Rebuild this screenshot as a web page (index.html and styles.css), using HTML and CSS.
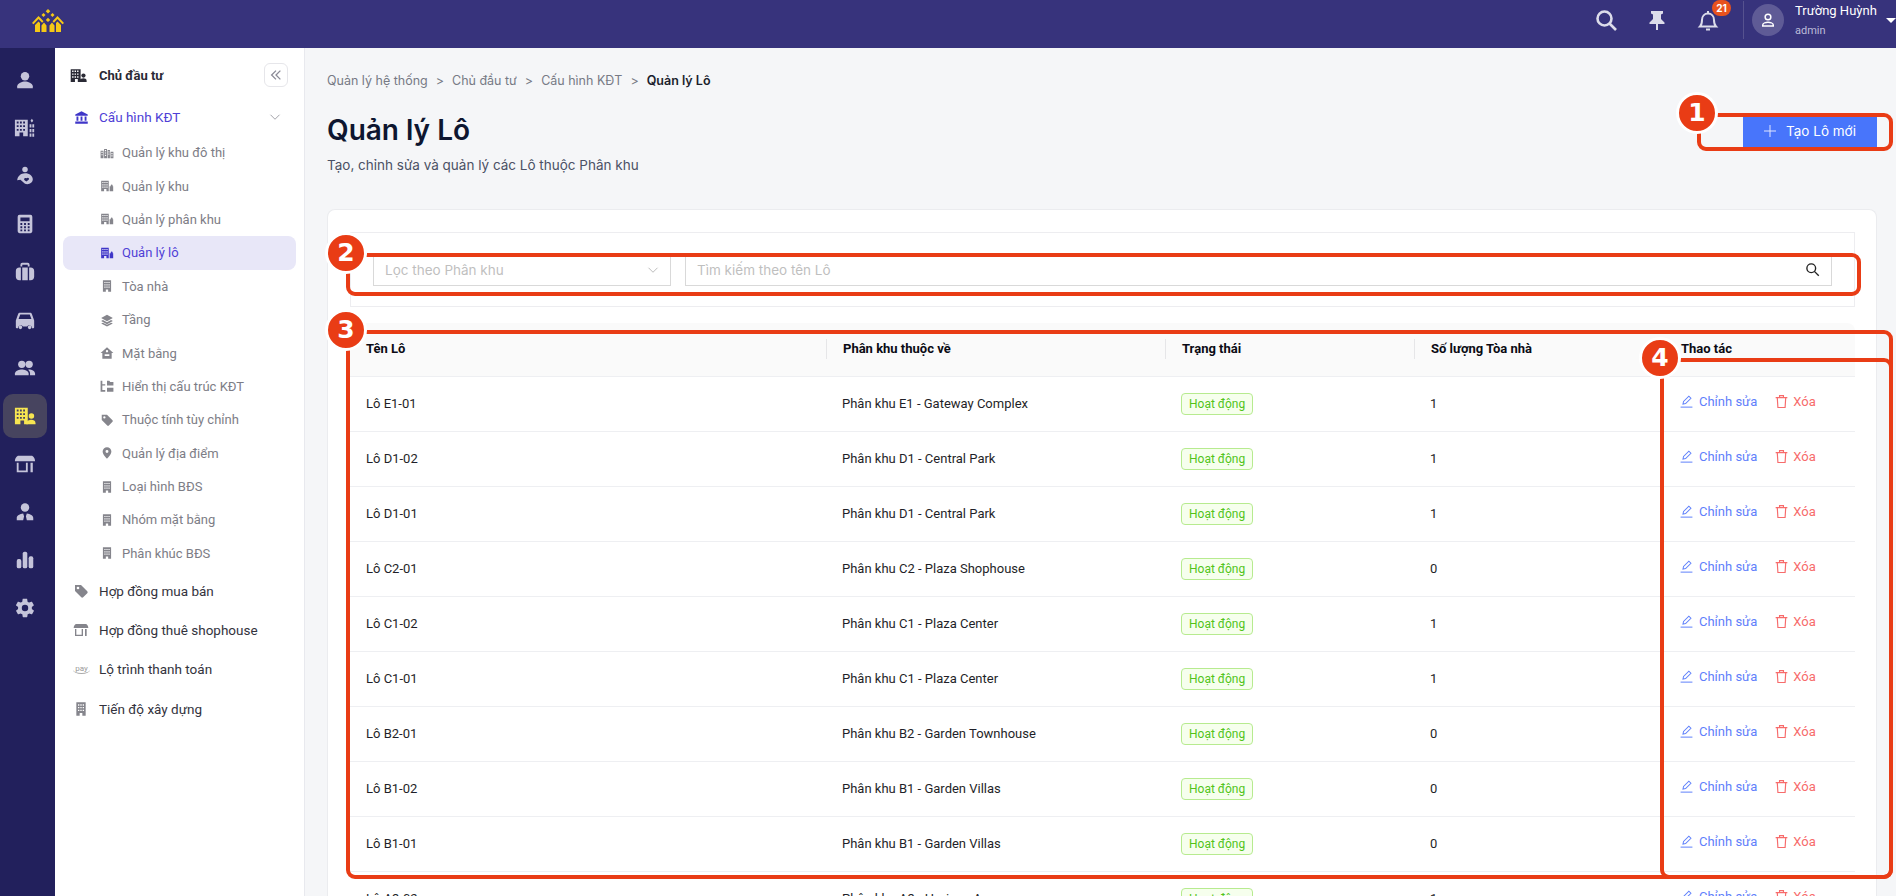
FILE: index.html
```html
<!DOCTYPE html>
<html lang="vi">
<head>
    <meta charset="UTF-8">
    <meta name="viewport" content="width=device-width, initial-scale=1.0">
    <title>Quản lý Lô</title>
    <link rel="stylesheet" href="styles.css">
</head>
<body>
    <svg class="sprite" aria-hidden="true">
        <symbol id="i-person" viewBox="0 0 24 24"><circle cx="12" cy="8" r="4.6"/><path d="M3.500 21v-2.200c0-3.400 5.600-5.200 8.500-5.200s8.500 1.800 8.500 5.200V21z"/></symbol>
        <symbol id="i-city" viewBox="0 0 24 24"><path d="M1 3h14v18H10v-4H6v4H1zM3 5v2h2V5zm3.500 0v2h2V5zM10 5v2h2V5zM3 9v2h2V9zm3.500 0v2h2V9zM10 9v2h2V9zM3 13v2h2v-2zm3.500 0v2h2v-2zm3.500 0v2h2v-2z"/><path d="M19.500 2l1.500 2-1.500 2L18 4zm-2.500 6h2v3.500h-2zm3 0h2v3.500h-2zm-3 5h2v3.500h-2zm3 0h2v3.500h-2zm-3 5h2v3.500h-2zm3 0h2v3.500h-2z"/></symbol>
        <symbol id="i-hand" viewBox="0 0 24 24"><circle cx="12" cy="5" r="3"/><path d="M12 9c5 0 8.500 3 8.500 6.500S16.500 22 12 20.500L7 16l-3.500.5C4 12 7.500 9 12 9zm1.500 5.500c-1.500-1-3.500.5-2 2l2 1.500 2.500-2c1.200-1.500-.8-3-2.500-1.500z"/></symbol>
        <symbol id="i-calc" viewBox="0 0 24 24"><path d="M6 2h12a2 2 0 0 1 2 2v16a2 2 0 0 1-2 2H6a2 2 0 0 1-2-2V4a2 2 0 0 1 2-2zm1 3v4h10V5zm0 6v2h2v-2zm4 0v2h2v-2zm4 0v2h2v-2zm-8 3.500v2h2v-2zm4 0v2h2v-2zm4 0v2h2v-2zM7 18v2h2v-2zm4 0v2h2v-2zm4 0v2h2v-2z"/></symbol>
        <symbol id="i-case" viewBox="0 0 24 24"><path d="M9 2h6a2 2 0 0 1 2 2v2h-2V4H9v2H7V4a2 2 0 0 1 2-2zM6 7h1.500v14H6a4 4 0 0 1-4-4v-6a4 4 0 0 1 4-4zm3 0h6v14H9zm7.500 0H18a4 4 0 0 1 4 4v6a4 4 0 0 1-4 4h-1.500z"/></symbol>
        <symbol id="i-car" viewBox="0 0 24 24"><path d="M6.500 4h11c1 0 1.700.6 2 1.400L22 12.500V20a1 1 0 0 1-1 1h-1.300a3 3 0 0 0-5.400-2H9.700a3 3 0 0 0-5.400 2H3a1 1 0 0 1-1-1v-7.500l2.500-7.100C4.800 4.600 5.500 4 6.500 4zm.3 2L5 11h14l-1.800-5zM7 18a2 2 0 1 1 0 4 2 2 0 0 1 0-4zm10 0a2 2 0 1 1 0 4 2 2 0 0 1 0-4z"/></symbol>
        <symbol id="i-people" viewBox="0 0 24 24"><circle cx="8.500" cy="8" r="4"/><circle cx="16.500" cy="8" r="4"/><path d="M1 20v-2c0-3 5-4.500 7.500-4.500S16 15 16 18v2z"/><path d="M17.500 20v-2c0-1.700-.9-3-2.200-4l1.200-.5c2.500 0 6.500 1.500 6.500 4.500v2z"/></symbol>
        <symbol id="i-owner" viewBox="0 0 24 24"><path d="M1 3h14v18h-4v-4H7v4H1zM3 5v2h2V5zm3.500 0v2h2V5zM10 5v2h2V5zM3 9v2h2V9zm3.500 0v2h2V9zM10 9v2h2V9zM3 13v2h2v-2zm3.500 0v2h2v-2zm3.500 0v2h2v-2z"/><circle cx="19" cy="12" r="3"/><path d="M13.500 21v-1.500c0-2.400 3.500-3.500 5.500-3.500s4.500 1.100 4.500 3.500V21z"/></symbol>
        <symbol id="i-shop" viewBox="0 0 24 24"><path d="M5 3h14c2 0 4 3 4 6H1c0-3 2-6 4-6zM3 10.500h2V19h8v-8.500h2V21H3zM18 10.500h2.500V21H18z"/></symbol>
        <symbol id="i-agent" viewBox="0 0 24 24"><circle cx="12" cy="7" r="4.600"/><path d="M3 21v-2.500c0-3 3.500-4.500 7-5l1 3-1 4.500zm18 0v-2.500c0-3-3.500-4.500-7-5l-1 3 1 4.500z"/></symbol>
        <symbol id="i-chart" viewBox="0 0 24 24"><rect x="3" y="11" width="5" height="10" rx="2"/><rect x="9.500" y="3" width="5" height="18" rx="2"/><rect x="16" y="8" width="5" height="13" rx="2"/></symbol>
        <symbol id="i-gear" viewBox="0 0 24 24"><path d="M19.400 13c.1-.3.100-.7.100-1s0-.7-.1-1l2.100-1.600c.2-.2.200-.4.100-.6l-2-3.500c-.1-.2-.4-.3-.6-.2l-2.500 1a7.600 7.600 0 0 0-1.700-1l-.4-2.700c0-.2-.2-.4-.5-.4h-4c-.2 0-.4.200-.5.400l-.4 2.700c-.6.200-1.200.6-1.700 1l-2.500-1c-.2-.1-.5 0-.6.200l-2 3.500c-.1.200-.1.500.1.600L4.500 11c0 .3-.1.700-.1 1s0 .7.100 1l-2.100 1.600c-.2.200-.2.400-.1.600l2 3.500c.1.200.4.300.6.200l2.500-1c.5.400 1.100.8 1.700 1l.4 2.700c0 .2.200.4.500.4h4c.2 0 .4-.2.500-.4l.4-2.700c.6-.2 1.200-.6 1.700-1l2.500 1c.2.100.5 0 .6-.2l2-3.500c.1-.2.100-.5-.1-.6zM12 15.500a3.500 3.500 0 1 1 0-7 3.500 3.500 0 0 1 0 7z"/></symbol>
        <symbol id="i-bank" viewBox="0 0 24 24"><path d="M12 2l10 5v2H2V7zM4 10.500h3V17H4zm6.500 0h3V17h-3zm6.500 0h3V17h-3zM2 18.500h20V22H2z"/></symbol>
        <symbol id="i-block" viewBox="0 0 24 24"><path d="M2 3h13v18h-4v-4H7v4H2zM4 5v2h2V5zm3.500 0v2h2V5zM11 5v2h2V5zM4 9v2h2V9zm3.500 0v2h2V9zM11 9v2h2V9zM4 13v2h2v-2zm3.500 0v2h2v-2zm3.500 0v2h2v-2z"/><path d="M16.500 12.500h2l-.2-1.500a1.800 1.800 0 0 1 3.500 0l-.2 1.500h1v8.500h-6z"/></symbol>
        <symbol id="i-urban" viewBox="0 0 24 24"><path d="M1 8h5v13H1zm6-3h5v16H7zm6 2h4v14h-4zm5 3h5v11h-5z"/><path d="M2.500 10v2h2v-2zm0 4v2h2v-2zm6-7v2h2V7zm0 4v2h2v-2zm0 4v2h2v-2zm6-6v2h1.500V9zm0 4v2h1.500v-2zm5-1v2h2v-2zm0 4v2h2v-2z" fill="#fff"/></symbol>
        <symbol id="i-tower" viewBox="0 0 24 24"><path d="M5 2h14v20h-5v-4h-4v4H5zM7.500 5v2h2V5zm3.500 0v2h2V5zm3.500 0v2h2V5zM7.500 9v2h2V9zM11 9v2h2V9zm3.500 0v2h2V9zm-7 4v2h2v-2zm3.500 0v2h2v-2zm3.500 0v2h2v-2z"/></symbol>
        <symbol id="i-layers" viewBox="0 0 24 24"><path d="M12 3l10 5.500L12 14 2 8.500zM5 12.200l7 3.800 7-3.800 3 1.600-10 5.500-10-5.500zM5 16.500l7 3.800 7-3.800 3 1.600L12 23 2 18.100z"/></symbol>
        <symbol id="i-home" viewBox="0 0 24 24"><path d="M12 2l11 10h-3v10H4V12H1zM8 14v3h8v-3zm4-7a2 2 0 1 0 0 4 2 2 0 0 0 0-4z"/></symbol>
        <symbol id="i-tree" viewBox="0 0 24 24"><path d="M1 3h3v16h5v3H1zM4 9h5v2H4zM12 3h4l1.500 2H23v6H12zM12 15h11v7H12z"/></symbol>
        <symbol id="i-tag" viewBox="0 0 24 24"><path d="M3 3h9l9.400 9.400a2 2 0 0 1 0 2.800l-6.200 6.200a2 2 0 0 1-2.800 0L3 12zm4.500 2.500a2 2 0 1 0 0 4 2 2 0 0 0 0-4z"/></symbol>
        <symbol id="i-pin" viewBox="0 0 24 24"><path d="M12 2a7.500 7.500 0 0 1 7.500 7.500C19.500 15 12 22 12 22S4.500 15 4.500 9.500A7.500 7.500 0 0 1 12 2zm0 5a2.500 2.500 0 1 0 0 5 2.500 2.500 0 0 0 0-5z"/></symbol>
        <symbol id="i-pen" viewBox="1 1 22 22" fill="none" stroke="currentColor" stroke-width="1.700"><path d="M6 16.500l1-4.500L16 3l3.500 3.500-9 9z"/><path d="M2 21.500h20"/></symbol>
        <symbol id="i-trash" viewBox="2 2 20 20" fill="none" stroke="currentColor" stroke-width="1.800"><path d="M3 6h18M9 6V3h6v3M5.500 6l1 15.500h11l1-15.500"/></symbol>
    </svg>

    <header class="topbar">
        <a class="logo" href="#" aria-label="Trang chủ">
            <svg viewBox="0 0 32 23" width="32" height="23" fill="#f5c816">
                <path d="M16 0l2.300 2.300L16 4.600l-2.300-2.300zM11.500 4l2 2-2 2-2-2zM20.500 4l2 2-2 2-2-2zM16 8.700l2.200 2.200-2.200 2.200-2.200-2.200z"/>
                <path d="M0 14l6.500-7 5 5.200-1.400 1.500-3.600-3.800-5 5.400zM32 14l-6.500-7-5 5.200 1.400 1.500 3.600-3.800 5 5.400z"/>
                <path d="M3 16l3.500-3.500L8 14v9H3zM29 16l-3.500-3.500L24 14v9h5zM9.500 23v-6.500l2.500-3 2.500 3V23zM17.500 23v-6.500l2.500-3 2.500 3V23z"/>
            </svg>
        </a>
        <div class="topbar-tools">
            <svg class="tool" viewBox="0 0 24 24" width="24" height="24" fill="none" stroke="#dcdcea" stroke-width="2.600"><circle cx="10.500" cy="10.500" r="7"/><path d="M15.500 15.500l6.500 6.500"/></svg>
            <svg class="tool" viewBox="0 0 24 24" width="24" height="24" fill="#dcdcea"><path d="M6 3h12v2.500l-2 1V11l3.500 3.500V16H13v6h-2v-6H4.500v-1.500L8 11V6.500l-2-1z"/></svg>
            <div class="bell">
                <svg viewBox="0 0 24 24" width="24" height="24" fill="none" stroke="#dcdcea" stroke-width="2"><path d="M4 18.500h16c-1.500-1.500-2-3-2-6.500 0-3.800-2.500-6.500-6-6.500S6 8.200 6 12c0 3.500-.5 5-2 6.500z"/><path d="M10 21.500h4M12 3v2.500"/></svg>
                <span class="badge">21</span>
            </div>
            <div class="user">
                <span class="avatar">
                    <svg viewBox="0 0 24 24" width="18" height="18" fill="none" stroke="#fff" stroke-width="2"><circle cx="12" cy="8" r="3.800"/><path d="M5 20v-1.500c0-2.500 4.500-3.500 7-3.500s7 1 7 3.500V20z"/></svg>
                </span>
                <div class="user-text">
                    <div class="user-name">Trường Huỳnh</div>
                    <div class="user-role">admin</div>
                </div>
                <span class="caret"></span>
            </div>
        </div>
    </header>

    <div class="layout">
        <nav class="rail">
            <a class="rail-item"><svg><use href="#i-person"/></svg></a>
            <a class="rail-item"><svg><use href="#i-city"/></svg></a>
            <a class="rail-item"><svg><use href="#i-hand"/></svg></a>
            <a class="rail-item"><svg><use href="#i-calc"/></svg></a>
            <a class="rail-item"><svg><use href="#i-case"/></svg></a>
            <a class="rail-item"><svg><use href="#i-car"/></svg></a>
            <a class="rail-item"><svg><use href="#i-people"/></svg></a>
            <a class="rail-item active"><svg><use href="#i-owner"/></svg></a>
            <a class="rail-item"><svg><use href="#i-shop"/></svg></a>
            <a class="rail-item"><svg><use href="#i-agent"/></svg></a>
            <a class="rail-item"><svg><use href="#i-chart"/></svg></a>
            <a class="rail-item"><svg><use href="#i-gear"/></svg></a>
        </nav>

        <aside class="sidebar">
            <div class="side-title">
                <svg class="side-title-icon"><use href="#i-owner"/></svg>
                <span>Chủ đầu tư</span>
                <button class="collapse">
                    <svg viewBox="0 0 16 16" width="14" height="14" fill="none" stroke="#8a8a96" stroke-width="1.500"><path d="M8 3L3 8l5 5M13 3L8 8l5 5"/></svg>
                </button>
            </div>
            <div class="group-head">
                <svg class="group-icon"><use href="#i-bank"/></svg>
                <span>Cấu hình KĐT</span>
                <svg class="group-arrow" viewBox="0 0 16 16" width="12" height="12" fill="none" stroke="#a0a0a8" stroke-width="1.300"><path d="M2 5l6 6 6-6"/></svg>
            </div>
            <ul class="sub-menu">
                <li><svg><use href="#i-urban"/></svg>Quản lý khu đô thị</li>
                <li><svg><use href="#i-block"/></svg>Quản lý khu</li>
                <li><svg><use href="#i-block"/></svg>Quản lý phân khu</li>
                <li class="active"><svg><use href="#i-block"/></svg>Quản lý lô</li>
                <li><svg><use href="#i-tower"/></svg>Tòa nhà</li>
                <li><svg><use href="#i-layers"/></svg>Tầng</li>
                <li><svg><use href="#i-home"/></svg>Mặt bằng</li>
                <li><svg><use href="#i-tree"/></svg>Hiển thị cấu trúc KĐT</li>
                <li><svg><use href="#i-tag"/></svg>Thuộc tính tùy chỉnh</li>
                <li><svg><use href="#i-pin"/></svg>Quản lý địa điểm</li>
                <li><svg><use href="#i-tower"/></svg>Loại hình BĐS</li>
                <li><svg><use href="#i-tower"/></svg>Nhóm mặt bằng</li>
                <li><svg><use href="#i-tower"/></svg>Phân khúc BĐS</li>
            </ul>
            <ul class="main-menu">
                <li><svg><use href="#i-tag"/></svg>Hợp đồng mua bán</li>
                <li><svg><use href="#i-shop"/></svg>Hợp đồng thuê shophouse</li>
                <li><span class="pay">pay</span>Lộ trình thanh toán</li>
                <li><svg><use href="#i-tower"/></svg>Tiến độ xây dựng</li>
            </ul>
        </aside>

        <main class="content">
            <div class="crumbs">
                <span>Quản lý hệ thống</span><i>&gt;</i>
                <span>Chủ đầu tư</span><i>&gt;</i>
                <span>Cấu hình KĐT</span><i>&gt;</i>
                <b>Quản lý Lô</b>
            </div>
            <div class="page-head">
                <div>
                    <h1>Quản lý Lô</h1>
                    <p>Tạo, chỉnh sửa và quản lý các Lô thuộc Phân khu</p>
                </div>
                <button class="btn-new">
                    <svg viewBox="0 0 12 12" width="12" height="12" stroke="#dfe6ff" stroke-width="1"><path d="M6 0v12M0 6h12"/></svg>
                    Tạo Lô mới
                </button>
            </div>

            <section class="card">
                <div class="filters">
                    <div class="select">
                        <span>Lọc theo Phân khu</span>
                        <svg viewBox="0 0 16 16" width="12" height="12" fill="none" stroke="#b5b5b5" stroke-width="1.200"><path d="M2 5l6 6 6-6"/></svg>
                    </div>
                    <div class="search">
                        <span>Tìm kiếm theo tên Lô</span>
                        <svg viewBox="0 0 24 24" width="15" height="15" fill="none" stroke="#222" stroke-width="2.200"><circle cx="10" cy="10" r="7"/><path d="M15 15l7 7"/></svg>
                    </div>
                </div>

                <table class="grid">
                    <thead>
                        <tr>
                            <th class="col-name"><span>Tên Lô</span></th>
                            <th class="col-zone"><span>Phân khu thuộc về</span></th>
                            <th class="col-status"><span>Trạng thái</span></th>
                            <th class="col-count"><span>Số lượng Tòa nhà</span></th>
                            <th class="col-act"><span>Thao tác</span></th>
                        </tr>
                    </thead>
                    <tbody>
                        <tr><td>Lô E1-01</td><td>Phân khu E1 - Gateway Complex</td><td><span class="tag">Hoạt động</span></td><td>1</td><td class="acts"><a class="edit"><svg><use href="#i-pen"/></svg>Chỉnh sửa</a><a class="del"><svg><use href="#i-trash"/></svg>Xóa</a></td></tr>
                        <tr><td>Lô D1-02</td><td>Phân khu D1 - Central Park</td><td><span class="tag">Hoạt động</span></td><td>1</td><td class="acts"><a class="edit"><svg><use href="#i-pen"/></svg>Chỉnh sửa</a><a class="del"><svg><use href="#i-trash"/></svg>Xóa</a></td></tr>
                        <tr><td>Lô D1-01</td><td>Phân khu D1 - Central Park</td><td><span class="tag">Hoạt động</span></td><td>1</td><td class="acts"><a class="edit"><svg><use href="#i-pen"/></svg>Chỉnh sửa</a><a class="del"><svg><use href="#i-trash"/></svg>Xóa</a></td></tr>
                        <tr><td>Lô C2-01</td><td>Phân khu C2 - Plaza Shophouse</td><td><span class="tag">Hoạt động</span></td><td>0</td><td class="acts"><a class="edit"><svg><use href="#i-pen"/></svg>Chỉnh sửa</a><a class="del"><svg><use href="#i-trash"/></svg>Xóa</a></td></tr>
                        <tr><td>Lô C1-02</td><td>Phân khu C1 - Plaza Center</td><td><span class="tag">Hoạt động</span></td><td>1</td><td class="acts"><a class="edit"><svg><use href="#i-pen"/></svg>Chỉnh sửa</a><a class="del"><svg><use href="#i-trash"/></svg>Xóa</a></td></tr>
                        <tr><td>Lô C1-01</td><td>Phân khu C1 - Plaza Center</td><td><span class="tag">Hoạt động</span></td><td>1</td><td class="acts"><a class="edit"><svg><use href="#i-pen"/></svg>Chỉnh sửa</a><a class="del"><svg><use href="#i-trash"/></svg>Xóa</a></td></tr>
                        <tr><td>Lô B2-01</td><td>Phân khu B2 - Garden Townhouse</td><td><span class="tag">Hoạt động</span></td><td>0</td><td class="acts"><a class="edit"><svg><use href="#i-pen"/></svg>Chỉnh sửa</a><a class="del"><svg><use href="#i-trash"/></svg>Xóa</a></td></tr>
                        <tr><td>Lô B1-02</td><td>Phân khu B1 - Garden Villas</td><td><span class="tag">Hoạt động</span></td><td>0</td><td class="acts"><a class="edit"><svg><use href="#i-pen"/></svg>Chỉnh sửa</a><a class="del"><svg><use href="#i-trash"/></svg>Xóa</a></td></tr>
                        <tr><td>Lô B1-01</td><td>Phân khu B1 - Garden Villas</td><td><span class="tag">Hoạt động</span></td><td>0</td><td class="acts"><a class="edit"><svg><use href="#i-pen"/></svg>Chỉnh sửa</a><a class="del"><svg><use href="#i-trash"/></svg>Xóa</a></td></tr>
                        <tr><td>Lô A3-02</td><td>Phân khu A3 - Horizon Arena</td><td><span class="tag">Hoạt động</span></td><td>1</td><td class="acts"><a class="edit"><svg><use href="#i-pen"/></svg>Chỉnh sửa</a><a class="del"><svg><use href="#i-trash"/></svg>Xóa</a></td></tr>
                    </tbody>
                </table>
            </section>
        </main>
    </div>

    <!-- red callouts drawn on top of the screenshot -->
    <div class="mark mark-1"><span class="num">1</span></div>
    <div class="mark mark-2"><span class="num">2</span></div>
    <div class="mark mark-3"><span class="num">3</span></div>
    <div class="mark mark-4"><span class="num">4</span></div>
</body>
</html>
```

FILE: styles.css
```css
* {
    box-sizing: border-box;
}
html, body {
    margin: 0;
    height: 100%;
    overflow: hidden;
}
body {
    font-family: Roboto, 'Liberation Sans', sans-serif;
    font-size: 13px;
    color: #1c1c28;
    background: #f5f6f8;
    position: relative;
}
.sprite {
    position: absolute;
    width: 0;
    height: 0;
}
ul {
    list-style: none;
    margin: 0;
    padding: 0;
}

/* top bar */
.topbar {
    height: 48px;
    background: #37337c;
    display: flex;
    align-items: center;
    justify-content: space-between;
    padding: 0 0 8px 32px;
}
.logo {
    display: flex;
}
.topbar-tools {
    display: flex;
    align-items: center;
}
.tool {
    display: block;
    margin-right: 27px;
}
.bell {
    position: relative;
    height: 24px;
    margin-right: 23px;
}
.badge {
    position: absolute;
    top: -8px;
    left: 16px;
    width: 19px;
    height: 16px;
    border-radius: 8px;
    background: #e8521e;
    color: #fff;
    font: 700 10px/16px Inter, sans-serif;
    text-align: center;
}
.user {
    height: 38px;
    border-left: 1px solid #56528f;
    padding-left: 8px;
    display: flex;
    align-items: center;
    width: 153px;
}
.avatar {
    width: 32px;
    height: 32px;
    border-radius: 50%;
    background: #5f5b96;
    display: flex;
    align-items: center;
    justify-content: center;
    margin-right: 11px;
}
.user-name {
    color: #fff;
    font-size: 13px;
    line-height: 16px;
    white-space: nowrap;
}
.user-role {
    color: #bcbbd8;
    font-size: 11px;
    line-height: 14px;
    margin-top: 5px;
}
.caret {
    border: 5px solid transparent;
    border-top-color: #fff;
    border-bottom-width: 0;
    margin: 0 0 0 9px;
}

/* layout */
.layout {
    display: flex;
    height: 848px;
}
.rail {
    width: 55px;
    background: #22205c;
    padding: 10px 8px 0 3px;
    flex-shrink: 0;
}
.rail-item {
    height: 44px;
    margin-bottom: 4px;
    border-radius: 10px;
    display: flex;
    align-items: center;
    justify-content: center;
}
.rail-item svg {
    width: 22px;
    height: 22px;
    fill: #c5c4da;
}
.rail-item.active {
    background: #47445f;
}
.rail-item.active svg {
    fill: #f7e651;
}

/* sidebar */
.sidebar {
    width: 250px;
    flex-shrink: 0;
    background: #fff;
    border-right: 1px solid #e8e9ee;
    padding: 14px 0 0 0;
}
.side-title {
    display: flex;
    align-items: center;
    height: 26px;
    padding: 0 16px 0 15px;
    font-weight: 700;
    font-size: 13px;
    color: #2a2a35;
}
.side-title-icon {
    width: 17px;
    height: 17px;
    fill: #2a2a35;
    margin-right: 12px;
}
.collapse {
    margin-left: auto;
    width: 24px;
    height: 24px;
    background: #fff;
    border: 1px solid #e6e6ea;
    border-radius: 6px;
    padding: 0;
    display: flex;
    align-items: center;
    justify-content: center;
}
.group-head {
    display: flex;
    align-items: center;
    height: 24px;
    margin-top: 17px;
    padding: 0 23px 0 19px;
    color: #4f3fd6;
    font-size: 13.5px;
}
.group-icon {
    width: 15px;
    height: 15px;
    fill: #3f36c8;
    margin-right: 10px;
}
.group-arrow {
    margin-left: auto;
}
.sub-menu {
    margin-top: 7px;
    padding: 0 8px;
}
.sub-menu li {
    height: 33.4px;
    display: flex;
    align-items: center;
    padding-left: 37px;
    color: #7d7d86;
    font-size: 13px;
    border-radius: 8px;
}
.sub-menu svg {
    width: 14px;
    height: 14px;
    fill: #85858c;
    margin-right: 8px;
    flex-shrink: 0;
}
.sub-menu .active {
    background: #e8e7f8;
    color: #4f3fd6;
}
.sub-menu .active svg {
    fill: #3f36c8;
}
.main-menu {
    margin-top: 1px;
}
.main-menu li {
    height: 39.3px;
    display: flex;
    align-items: center;
    padding-left: 18px;
    font-size: 13.5px;
    color: #33333d;
}
.main-menu svg {
    width: 16px;
    height: 16px;
    fill: #85858c;
    margin-right: 10px;
    flex-shrink: 0;
}
.pay {
    width: 17px;
    margin-right: 9px;
    font-size: 8px;
    line-height: 9px;
    color: #999;
    border-bottom: 1px solid #aaa;
    border-radius: 0 0 50% 50% / 0 0 4px 4px;
    text-align: center;
}

/* content */
.content {
    flex: 1;
    min-width: 0;
    padding: 23px 19px 0 22px;
    font-family: Inter, sans-serif;
}
.crumbs {
    font-size: 12.5px;
    line-height: 20px;
    color: #777a85;
    display: flex;
    align-items: center;
}
.crumbs i {
    font-style: normal;
    margin: 0 8px;
}
.crumbs b {
    font-weight: 600;
    color: #1b1f2d;
}
.page-head {
    display: flex;
    justify-content: space-between;
    margin-top: 21px;
    height: 97px;
}
h1 {
    margin: 0;
    font-size: 28px;
    line-height: 36px;
    font-weight: 600;
    color: #0e1630;
}
.page-head p {
    margin: 7px 0 0;
    font-size: 13.5px;
    line-height: 20px;
    color: #4b5165;
}
.btn-new {
    width: 134px;
    height: 32px;
    margin-top: 3px;
    border: none;
    background: #4875fb;
    color: #fff;
    font: 400 13.5px Inter, sans-serif;
    display: flex;
    align-items: center;
    justify-content: center;
    gap: 10px;
}
.card {
    background: #fff;
    border: 1px solid #ebecef;
    border-bottom: none;
    border-radius: 8px 8px 0 0;
    padding: 22px 21px 0 22px;
    height: 700px;
    overflow: hidden;
}
.filters {
    height: 75px;
    border: 1px solid #ededf0;
    display: flex;
    align-items: center;
    gap: 14px;
    padding: 0 22px;
}
.select, .search {
    height: 32px;
    border: 1px solid #d9d9d9;
    color: #bfbfbf;
    font-size: 13.5px;
    display: flex;
    align-items: center;
    justify-content: space-between;
    padding: 0 11px;
}
.select {
    width: 298px;
}
.search {
    flex: 1;
}
.grid {
    width: 100%;
    margin-top: 16px;
    border-collapse: collapse;
    table-layout: fixed;
    font-family: Roboto, sans-serif;
    font-size: 13px;
}
.col-name { width: 476px; }
.col-zone { width: 339px; }
.col-status { width: 249px; }
.col-count { width: 250px; }
.grid th {
    height: 53px;
    background: #fafafa;
    border-bottom: 1px solid #eeeff2;
    text-align: left;
    padding: 0 0 1px;
    font-weight: 700;
    font-size: 13px;
    color: #0b0b14;
}
.grid th span {
    display: block;
    padding-left: 16px;
    line-height: 20px;
    border-left: 1px solid #e6e6e8;
}
.grid th:first-child span {
    border-left: none;
}
.grid th:first-child {
    border-radius: 8px 0 0 0;
}
.grid th:last-child {
    border-radius: 0 8px 0 0;
}
.grid td {
    height: 55px;
    border-bottom: 1px solid #eeeff2;
    padding: 0 16px;
    color: #1f1f28;
}
.tag {
    display: inline-block;
    height: 22px;
    line-height: 20px;
    padding: 0 7px;
    border: 1px solid #b7eb8f;
    border-radius: 4px;
    background: #f6ffed;
    color: #52c41a;
    font-size: 12px;
}
.acts {
    white-space: nowrap;
}
.acts a {
    display: inline-flex;
    align-items: center;
    margin-top: -4px;
}
.acts svg {
    width: 13px;
    height: 13px;
    margin-right: 6px;
}
.edit {
    color: #5f80fb;
    margin-right: 18px;
}
.del {
    color: #f76b6b;
}
.acts .del svg {
    margin-right: 5px;
}

/* callouts */
.mark {
    position: absolute;
    border: 4px solid #e93c15;
    border-radius: 9px;
}
.num {
    position: absolute;
    width: 42px;
    height: 42px;
    left: -25px;
    top: -25px;
    border-radius: 50%;
    border: 3px solid #fff;
    background: #e93c15;
    color: #fff;
    font: 700 25px/36px 'DejaVu Sans', sans-serif;
    text-align: center;
}
.mark-1 { left: 1697px; top: 113px; width: 196px; height: 38px; }
.mark-2 { left: 346px; top: 253px; width: 1515px; height: 43px; }
.mark-3 { left: 346px; top: 330px; width: 1547px; height: 549px; }
.mark-4 { left: 1660px; top: 358px; width: 233px; height: 521px; }
```
